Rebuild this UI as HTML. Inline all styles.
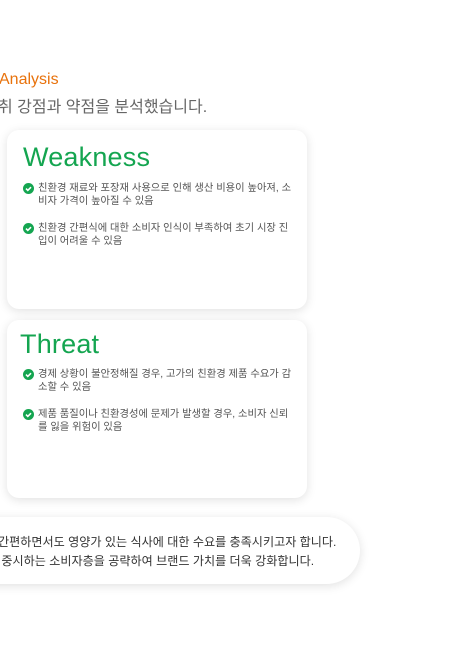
<!DOCTYPE html>
<html><head><meta charset="utf-8"><style>
*{margin:0;padding:0;box-sizing:border-box}
body{width:458px;height:646px;background:#fff;position:relative;overflow:hidden;font-family:"Liberation Sans","Noto Sans CJK KR",sans-serif}
.a{position:absolute;white-space:nowrap}
.card{position:absolute;left:7px;width:300px;background:#fff;border-radius:12px;box-shadow:0 2px 10px rgba(0,0,0,.12)}
.h{position:absolute;color:#14a550;font-size:27px;font-family:"Liberation Sans",sans-serif;letter-spacing:0.2px}
.li{position:absolute;left:16px;width:280px;font-size:10.3px;line-height:13px;color:#555;padding-left:15px}
.li svg{position:absolute;left:0;top:1px}
.pill{position:absolute;left:-40px;top:517px;width:400px;height:67px;border-radius:34px;background:#fff;box-shadow:0 2px 10px rgba(0,0,0,.12)}
</style></head><body>
<div class="a" style="left:-1px;top:71px;font-size:16px;color:#e8720c">Analysis</div>
<div class="a" style="left:-2px;top:93px;font-size:16px;color:#666">취 강점과 약점을 분석했습니다.</div>

<div class="card" style="top:130px;height:179px">
<div class="h" style="left:16px;top:12px">Weakness</div>
<div class="li" style="top:52px"><svg width="11" height="11" viewBox="0 0 11 11"><circle cx="5.5" cy="5.5" r="5.5" fill="#14a550"/><path d="M3 5.6l1.8 1.8L8 4.2" stroke="#fff" stroke-width="1.6" fill="none"/></svg>친환경 재료와 포장재 사용으로 인해 생산 비용이 높아져, 소<br>비자 가격이 높아질 수 있음</div>
<div class="li" style="top:92px"><svg width="11" height="11" viewBox="0 0 11 11"><circle cx="5.5" cy="5.5" r="5.5" fill="#14a550"/><path d="M3 5.6l1.8 1.8L8 4.2" stroke="#fff" stroke-width="1.6" fill="none"/></svg>친환경 간편식에 대한 소비자 인식이 부족하여 초기 시장 진<br>입이 어려울 수 있음</div>
</div>

<div class="card" style="top:320px;height:178px">
<div class="h" style="left:13px;top:9px">Threat</div>
<div class="li" style="top:48px"><svg width="11" height="11" viewBox="0 0 11 11"><circle cx="5.5" cy="5.5" r="5.5" fill="#14a550"/><path d="M3 5.6l1.8 1.8L8 4.2" stroke="#fff" stroke-width="1.6" fill="none"/></svg>경제 상황이 불안정해질 경우, 고가의 친환경 제품 수요가 감<br>소할 수 있음</div>
<div class="li" style="top:88px"><svg width="11" height="11" viewBox="0 0 11 11"><circle cx="5.5" cy="5.5" r="5.5" fill="#14a550"/><path d="M3 5.6l1.8 1.8L8 4.2" stroke="#fff" stroke-width="1.6" fill="none"/></svg>제품 품질이나 친환경성에 문제가 발생할 경우, 소비자 신뢰<br>를 잃을 위험이 있음</div>
</div>

<div class="pill"></div>
<div class="a" style="left:-2px;top:533px;font-size:12.1px;line-height:19px;color:#333">간편하면서도 영양가 있는 식사에 대한 수요를 충족시키고자 합니다.<br>&nbsp;중시하는 소비자층을 공략하여 브랜드 가치를 더욱 강화합니다.</div>
</body></html>
